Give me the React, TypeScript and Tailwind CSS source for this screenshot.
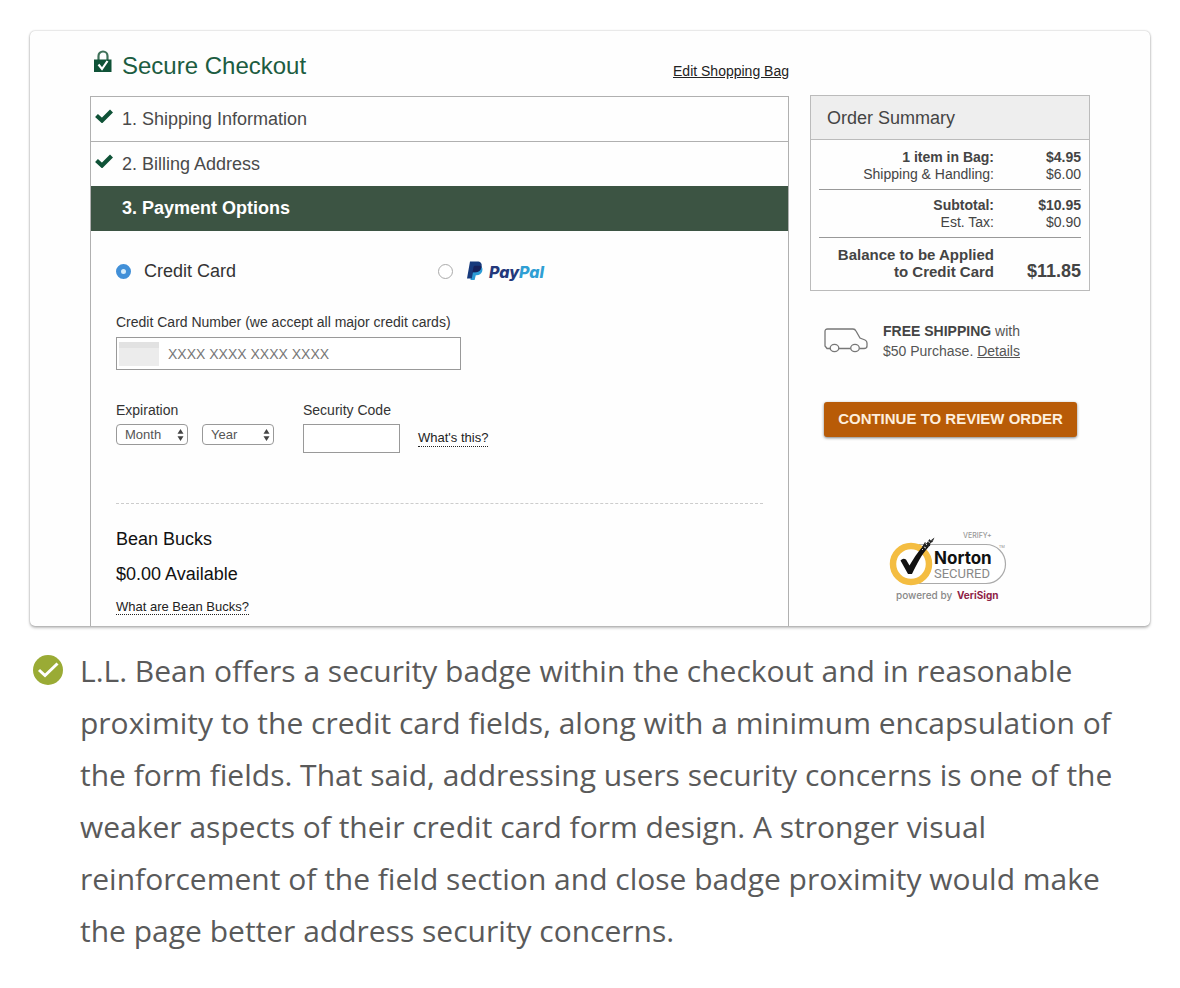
import React from "react";

function LockIcon() {
  return (
    <svg width="18" height="24" viewBox="0 0 18 24" aria-hidden="true">
      <path d="M4.500 10V6a4.500 4.500 0 0 1 9 0V10" fill="none" stroke="#3f7159" strokeWidth="2.200" />
      <rect x="0" y="9.500" width="17.500" height="12.500" fill="#0f5237" />
      <path d="M4.500 14.500l3.500 4.500 5.500-8" fill="none" stroke="#fff" strokeWidth="2.200" />
    </svg>
  );
}

function CheckIcon() {
  return (
    <svg width="18" height="14" viewBox="0 0 18 14" aria-hidden="true">
      <path d="M1.500 6.500L7 11.500 16.500 2" fill="none" stroke="#0f5237" strokeWidth="4.200" />
    </svg>
  );
}

function VanIcon() {
  return (
    <svg width="44" height="26" viewBox="0 0 44 26" fill="none" stroke="#777" strokeWidth="1.300" aria-hidden="true">
      <path d="M6 20.500H3L1 18V3.500Q1 1 3.500 1H29q2 0 3 2l4 7 5 2q2 1 2 3v3q0 2.500-3 2.500h-4.500M15 20.500h11.500" />
      <ellipse cx="10.500" cy="20" rx="4.300" ry="3.700" />
      <ellipse cx="31" cy="20" rx="4.300" ry="3.700" />
    </svg>
  );
}

function PayPalLogo() {
  return (
    <span className="flex items-center gap-[6px]">
      <svg width="16" height="20" viewBox="0 0 16 20" aria-hidden="true">
        <path d="M5 5h8.500c2 1 2.300 3 1.700 5.200-.8 2.800-3 4-5.700 4H8.800L7.600 19H3.500z" fill="#2b9bd6" />
        <path d="M3 .5h7c3.800 0 5.300 2 4.600 5.300-.8 3.700-3.200 5.400-6.600 5.400H6L4.800 17.500H0z" fill="#173a7c" />
        <path d="M6.500 6q.3-1.200 1.500-1.200h4.500q1.200 0 2 .6C14 9.500 11.400 11.200 8 11.200H5.500z" fill="#17225c" />
      </svg>
      <span className="pt-[2px] font-[Inter,sans-serif] text-[16px] font-extrabold italic leading-5 text-[#24397c]">
        Pay<span className="text-[#2f9fd4]">Pal</span>
      </span>
    </span>
  );
}

function NortonBadge() {
  return (
    <svg width="120" height="74" viewBox="0 0 120 74" role="img" aria-label="Norton Secured, powered by VeriSign">
      <path d="M30 14.500H97a19.500 19.500 0 0 1 0 39H30" fill="#fff" stroke="#aaa" strokeWidth="1.200" />
      <circle cx="22" cy="34" r="18" fill="#fff" stroke="#f4bd41" strokeWidth="6.500" />
      <path d="M11.500 30.500q2.500-3 5.500-1l3.500 6C26 26.500 30 20 36 14.500l4 2C32 25 28 34 23 44h-4z" fill="#111" />
      <path d="M33 17l3-5 1.500 1.500 3-4.500 1 1.500 4-3-2 4.500-2 1-.5 3-3 1-2 3z" fill="#222" />
      <path d="M36.500 13.500l1.500 1.500M39.500 11l1 2M42 9.500l1 1M35 17l2 1M33 19l1 1" stroke="#fff" strokeWidth=".8" />
      <text x="74" y="8" fontFamily="Inter, sans-serif" fontSize="7" fontWeight="500" fill="#999">VERIFY+</text>
      <text x="110" y="18" fontFamily="Open Sans, sans-serif" fontSize="4" fill="#888">TM</text>
      <text x="45" y="34" fontFamily="Inter, sans-serif" fontSize="17" fontWeight="700" fill="#111">Norton</text>
      <text x="45" y="48" fontFamily="Roboto, sans-serif" fontSize="13" fill="#888">SECURED</text>
      <text x="7" y="69" fontFamily="Inter, sans-serif" fontSize="10" fontWeight="500" fill="#888">powered by</text>
      <text x="68" y="69" fontFamily="Inter, sans-serif" fontSize="10" fontWeight="700" fill="#8e2346">VeriSign</text>
    </svg>
  );
}

const radioClass =
  "m-0 h-[15px] w-[15px] shrink-0 appearance-none rounded-full border border-[#aaa] bg-white checked:border-[5px] checked:border-[#4290d8] checked:bg-[#d5ecfb]";

function Period({ id, label, first }: { id: string; label: string; first: string }) {
  return (
    <span className="relative block">
      <select
        id={id}
        aria-label={label}
        className="block h-[21px] w-[72px] appearance-none rounded-[4px] border border-[#999] bg-white pl-2 text-[13px] leading-[18px] text-[#555]"
      >
        <option>{first}</option>
      </select>
      <svg className="pointer-events-none absolute right-1 top-[5px]" width="7" height="12" viewBox="0 0 7 12" fill="#444" aria-hidden="true">
        <path d="M3.500 0L6.500 4.800H.5zM3.500 12L6.500 7.200H.5z" />
      </svg>
    </span>
  );
}

function DoneStep({ children }: { children: React.ReactNode }) {
  return (
    <li className="flex h-[45px] items-center gap-[9px] border-t border-[#b0b0b0] pl-1 text-[18px] text-[#4a4a4a]">
      <span className="pb-[6px]">
        <CheckIcon />
      </span>
      <a href="#step">{children}</a>
    </li>
  );
}

function OrderSummary() {
  return (
    <section className="border border-[#bbb] pb-[10px] text-[#444]">
      <h2 className="h-[44px] border-b border-[#bbb] bg-[#eee] pl-4 text-[18px] leading-[44px]">Order Summary</h2>
      <div className="px-2 pt-[9px]">
        <table className="w-full border-collapse text-right text-[14px] leading-[17px]">
          <tbody>
            <tr className="font-bold">
              <td>1 item in Bag:</td>
              <td className="w-[87px]">$4.95</td>
            </tr>
            <tr className="border-b border-[#999]">
              <td className="pb-[6px]">Shipping &amp; Handling:</td>
              <td className="pb-[6px]">$6.00</td>
            </tr>
            <tr className="font-bold">
              <td className="pt-[7px]">Subtotal:</td>
              <td className="pt-[7px]">$10.95</td>
            </tr>
            <tr className="border-b border-[#999]">
              <td className="pb-[6px]">Est. Tax:</td>
              <td className="pb-[6px]">$0.90</td>
            </tr>
            <tr className="font-bold">
              <td className="pt-2 text-[15px]">
                Balance to be Applied
                <br />
                to Credit Card
              </td>
              <td className="pt-2 align-bottom text-[18px]">$11.85</td>
            </tr>
          </tbody>
        </table>
      </div>
    </section>
  );
}

export default function App() {
  return (
    <main className="min-h-screen bg-white px-[30px] pb-7 pt-[31px] font-['Liberation_Sans',Arial,sans-serif]">
      <div className="flex gap-[21px] rounded-[5px] bg-[#fefefe] px-[60px] shadow-[0_0_2px_rgba(0,0,0,0.3),0_2px_3px_rgba(0,0,0,0.25)]">
        <div className="flex min-w-0 flex-1 flex-col">
          <header className="flex h-[65px] items-center justify-between">
            <h1 className="flex items-center gap-[10px] pl-1 pt-1 text-[24px] leading-8 text-[#1c5c41]">
              <span className="pb-2">
                <LockIcon />
              </span>
              Secure Checkout
            </h1>
            <a href="#bag" className="pt-[14px] text-[14px] leading-5 text-[#222] underline">
              Edit Shopping Bag
            </a>
          </header>
          <div className="flex-1 border-x border-[#b0b0b0]">
            <ol>
              <DoneStep>1. Shipping Information</DoneStep>
              <DoneStep>2. Billing Address</DoneStep>
              <li className="h-[45px] bg-[#3c5443] pl-[31px] text-[18px] font-bold leading-[44px] text-white">3. Payment Options</li>
            </ol>
            <form className="pb-[9px] pl-[25px] pr-[25px] pt-7 text-[14px] leading-5 text-[#333]">
              <div className="flex h-6 items-center">
                <label className="flex w-[322px] items-center gap-[13px] text-[18px] leading-6">
                  <input type="radio" name="method" defaultChecked className={radioClass} />
                  Credit Card
                </label>
                <label className="flex items-center gap-[14px]">
                  <input type="radio" name="method" aria-label="PayPal" className={radioClass} />
                  <PayPalLogo />
                </label>
              </div>
              <label htmlFor="number" className="mt-[29px] block">
                Credit Card Number (we accept all major credit cards)
              </label>
              <div className="mt-[5px] flex h-[33px] w-[345px] items-center border border-[#999] bg-white pl-[2px]">
                <span className="h-[24px] w-[40px] border-t-[6px] border-[#e2e2e2] bg-[#ececec]" />
                <input
                  id="number"
                  placeholder="XXXX XXXX XXXX XXXX"
                  className="min-w-0 flex-1 bg-transparent pl-[9px] text-[14px] leading-5 outline-none placeholder:text-[#777]"
                />
              </div>
              <div className="mt-[30px] flex">
                <div className="w-[187px]">
                  <label htmlFor="month" className="block">
                    Expiration
                  </label>
                  <div className="mt-1 flex gap-[14px]">
                    <Period id="month" label="Expiration month" first="Month" />
                    <Period id="year" label="Expiration year" first="Year" />
                  </div>
                </div>
                <div>
                  <label htmlFor="code" className="block">
                    Security Code
                  </label>
                  <div className="mt-1 flex items-center gap-[18px]">
                    <input id="code" className="h-[29px] w-[97px] border border-[#999] bg-white px-2" />
                    <a href="#code-help" className="border-b border-dotted border-[#222] text-[13px] leading-4 text-[#222]">
                      What's this?
                    </a>
                  </div>
                </div>
              </div>
              <hr className="mt-[50px] border-0 border-t border-dashed border-[#ccc]" />
              <h2 className="mt-[23px] text-[18px] leading-6 text-[#111]">Bean Bucks</h2>
              <p className="mt-[11px] text-[18px] leading-6 text-[#111]">$0.00 Available</p>
              <p className="mt-[11px] text-[13px] leading-5">
                <a href="#bucks" className="border-b border-dotted border-[#222] text-[#222]">
                  What are Bean Bucks?
                </a>
              </p>
            </form>
          </div>
        </div>
        <aside className="w-[280px] shrink-0 pt-16">
          <OrderSummary />
          <div className="mt-[30px] flex items-center gap-[15px] pl-[14px] text-[14px] leading-5 text-[#555]">
            <VanIcon />
            <p>
              <b className="text-[#444]">FREE SHIPPING</b> with
              <br />
              $50 Purchase.{" "}
              <a href="#details" className="underline">
                Details
              </a>
            </p>
          </div>
          <button
            type="button"
            className="ml-[14px] mt-[41px] block h-[35px] w-[253px] rounded-[3px] bg-[#b85b07] text-[15px] font-bold text-[#fdeedd] shadow-[0_1px_3px_rgba(0,0,0,0.5)]"
          >
            CONTINUE TO REVIEW ORDER
          </button>
          <div className="mt-[93px] pl-[79px]">
            <NortonBadge />
          </div>
        </aside>
      </div>
      <div className="mt-[19px] flex gap-[17px] pl-[3px]">
        <svg className="mt-[10px] shrink-0" width="30" height="30" viewBox="0 0 30 30" aria-hidden="true">
          <circle cx="15" cy="15" r="15" fill="#9aab35" />
          <path d="M6 15l6 5.500L24.500 8.500" fill="none" stroke="#fff" strokeWidth="3" />
        </svg>
        <p className="font-['Open_Sans',sans-serif] text-[30px] leading-[52px] text-[#5a5a5a]">
          L.L. Bean offers a security badge within the checkout and in reasonable
          <br />
          proximity to the credit card fields, along with a minimum encapsulation of
          <br />
          the form fields. That said, addressing users security concerns is one of the
          <br />
          weaker aspects of their credit card form design. A stronger visual
          <br />
          reinforcement of the field section and close badge proximity would make
          <br />
          the page better address security concerns.
        </p>
      </div>
    </main>
  );
}
